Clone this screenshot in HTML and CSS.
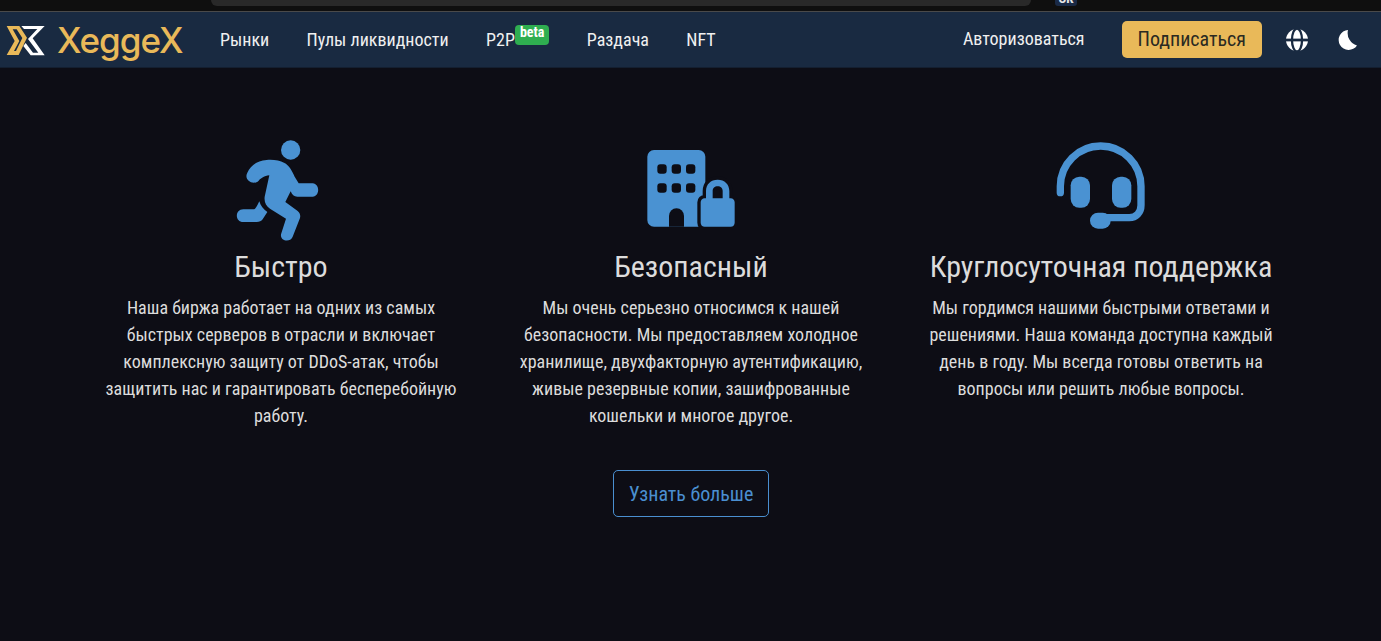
FILE: index.html
```html
<!DOCTYPE html>
<html lang="ru">

<head>
	<meta charset="UTF-8">
	<meta name="viewport" content="width=device-width, initial-scale=1.0">
	<title>XeggeX</title>
	<link rel="stylesheet" href="styles.css">
</head>

<body>
	<!-- browser strip above the page -->
	<div class="strip">
		<div class="strip-bar"></div>
		<div class="strip-badge">OK</div>
	</div>

	<header class="navbar">
		<a class="brand" href="#">
			<svg class="brand-mark" viewBox="0 0 132 114">
				<path fill="#e9b959" fill-rule="evenodd" d="M8 15H46L69 50 44 102H8L32 60zM26 25L46 60 30 90H36L55 51 38 25z"/>
				<path fill="#fff" d="M52 15H122L86 52 122 103H80L58 75 65 66 87 95H103L72 54 100 24H60z"/>
			</svg>
			<span class="brand-name">XeggeX</span>
		</a>
		<nav class="nav-left">
			<a href="#">Рынки</a>
			<a href="#">Пулы ликвидности</a>
			<a href="#">P2P<span class="beta">beta</span></a>
			<a href="#">Раздача</a>
			<a href="#">NFT</a>
		</nav>
		<div class="nav-right">
			<a class="login" href="#">Авторизоваться</a>
			<a class="signup" href="#">Подписаться</a>
			<svg class="globe" viewBox="0 0 24 24">
				<circle cx="12" cy="12" r="12" fill="#fff"/>
				<ellipse cx="12" cy="12" rx="5.500" ry="12.500" fill="none" stroke="#192a41" stroke-width="2.500"/>
				<path d="M0 12H24" stroke="#192a41" stroke-width="3"/>
			</svg>
			<svg class="moon" viewBox="0 0 19 20">
				<path fill="#fff" d="M10 0A10 10 0 1 0 19 15.500 13 13 0 0 1 10 0z"/>
			</svg>
		</div>
	</header>

	<main class="features">
		<div class="cols">
			<section class="col">
				<svg class="icon" viewBox="3 0 360 360">
					<circle cx="212" cy="60" r="29"/>
					<path d="M82 128C92 108 108 92 140 90 160 88 180 92 192 98 208 106 216 122 224 140L236 160H278C300 162 300 198 278 200H232C222 200 216 194 212 184L196 216 232 242C240 248 242 256 240 264L218 320C210 340 176 332 184 310L198 266 150 236C138 228 132 216 134 200L148 136C132 138 124 144 116 152 100 168 70 150 82 128z"/>
					<path d="M118 214C122 228 130 238 142 246L128 268C124 274 118 276 110 276H70C44 276 44 238 70 238H100C106 238 108 234 118 214z"/>
				</svg>
				<h2>Быстро</h2>
				<p>Наша биржа работает на одних из самых быстрых серверов в отрасли и включает комплексную защиту от DDoS-атак, чтобы защитить нас и гарантировать бесперебойную работу.</p>
			</section>
			<section class="col">
				<svg class="icon" viewBox="3 -15 360 360">
					<rect x="52" y="45" width="174" height="230" rx="20"/>
					<g class="hole">
						<rect x="82" y="88" width="28" height="28" rx="9"/>
						<rect x="125" y="88" width="28" height="28" rx="9"/>
						<rect x="168" y="88" width="28" height="28" rx="9"/>
						<rect x="82" y="145" width="28" height="28" rx="9"/>
						<rect x="125" y="145" width="28" height="28" rx="9"/>
						<rect x="168" y="145" width="28" height="28" rx="9"/>
						<path d="M117 275V243A22 23 0 0 1 162 243V275z"/>
					</g>
					<path class="lock" fill-rule="evenodd" d="M228 190V168C228 148 242 134 263 134S298 148 298 168V190H302C309 190 314 195 314 202V263C314 270 309 275 302 275H224C217 275 212 270 212 263V202C212 195 217 190 224 190zM248 190H278V168C278 160 272 154 263 154S248 160 248 168z"/>
				</svg>
				<h2>Безопасный</h2>
				<p>Мы очень серьезно относимся к нашей безопасности. Мы предоставляем холодное хранилище, двухфакторную аутентификацию, живые резервные копии, зашифрованные кошельки и многое другое.</p>
			</section>
			<section class="col">
				<svg class="icon" viewBox="3 0 360 360">
					<path class="line" d="M61 188V169C61 102 115 48 182 48S303 102 303 169V226C303 248 288 263 268 263H200"/>
					<rect x="92" y="140" width="58" height="93" rx="26"/>
					<rect x="216" y="140" width="58" height="93" rx="26"/>
					<rect x="150" y="248" width="62" height="48" rx="24"/>
				</svg>
				<h2>Круглосуточная поддержка</h2>
				<p>Мы гордимся нашими быстрыми ответами и решениями. Наша команда доступна каждый день в году. Мы всегда готовы ответить на вопросы или решить любые вопросы.</p>
			</section>
		</div>
		<a class="more" href="#">Узнать больше</a>
	</main>
</body>

</html>
```
FILE: styles.css
```css
* {
	margin: 0;
	padding: 0;
	box-sizing: border-box;
}

html, body {
	height: 100%;
}

body {
	background-color: #0d0d15;
	color: #dcdcdc;
	font-family: Roboto, "Liberation Sans", sans-serif;
	font-stretch: condensed;
	overflow: hidden;
}

a {
	text-decoration: none;
	color: inherit;
}

.strip {
	position: relative;
	height: 11px;
	background: #0f0f0f;
}

.strip-bar {
	width: 820px;
	height: 6px;
	margin-left: 211px;
	background: #292929;
	border-radius: 0 0 14px 14px;
}

.strip-badge {
	position: absolute;
	left: 1055px;
	top: -9px;
	width: 22px;
	height: 15px;
	background: #1a2a46;
	border-radius: 3px;
	color: #e6e6e6;
	font-size: 13px;
	font-weight: 700;
	line-height: 15px;
	text-align: center;
}

.navbar {
	display: flex;
	align-items: center;
	height: 57px;
	padding-left: 4px;
	background: #192a41;
	border-top: 1px solid #4a4a4a;
	border-bottom: 1px solid #141f30;
}

.brand {
	display: flex;
	align-items: center;
	gap: 9px;
	width: 197px;
}

.brand-mark {
	width: 44px;
	height: 38px;
}

.brand-name {
	margin-top: 2px;
	color: #e9b959;
	font-family: Inter, sans-serif;
	font-stretch: normal;
	font-size: 35px;
	font-weight: 500;
	letter-spacing: -1px;
	line-height: 1;
}

.nav-left {
	display: flex;
	gap: 37.400px;
	margin-left: 19px;
	color: #f0f0f0;
	font-size: 18px;
}

.beta {
	position: relative;
	top: -5px;
	display: inline-block;
	vertical-align: 4px;
	padding: 0 5px;
	height: 20px;
	background: #2fae50;
	border-radius: 4px;
	color: #fff;
	font-size: 14px;
	font-weight: 700;
	line-height: 15px;
}

.nav-right {
	display: flex;
	align-items: center;
	margin-left: auto;
	padding-right: 24px;
	color: #f0f0f0;
	font-size: 18px;
}

.login {
	margin-bottom: 2px;
}

.signup {
	margin-left: 37px;
	padding: 7px 16px;
	background: #e9b959;
	border-radius: 5px;
	color: #2a2a22;
	font-size: 20px;
	line-height: 23px;
}

.globe {
	width: 22px;
	height: 22px;
	margin-left: 24px;
}

.moon {
	width: 19px;
	height: 20px;
	margin-left: 30px;
}

.features {
	display: flex;
	flex-direction: column;
	align-items: center;
	padding: 62px 0 0 1px;
}

.cols {
	display: flex;
	justify-content: center;
	gap: 50px;
}

.col {
	width: 360px;
	text-align: center;
}

.icon {
	display: block;
	width: 120px;
	height: 120px;
	margin: 0 auto;
	fill: #4a92d2;
}

.hole {
	fill: #0d0d15;
}

.lock {
	stroke: #0d0d15;
	stroke-width: 20;
	paint-order: stroke;
}

.line {
	fill: none;
	stroke: #4a92d2;
	stroke-width: 22;
	stroke-linecap: round;
}

h2 {
	margin-top: -1px;
	font-size: 30px;
	font-weight: 400;
	line-height: 36px;
}

.col p {
	margin-top: 9px;
	font-size: 18px;
	line-height: 27px;
}

.more {
	margin-top: 41px;
	padding: 12px 15px 10px;
	border: 1px solid #4a8fd0;
	border-radius: 5px;
	color: #4a8fd0;
	font-size: 20px;
	line-height: 23px;
}
```
